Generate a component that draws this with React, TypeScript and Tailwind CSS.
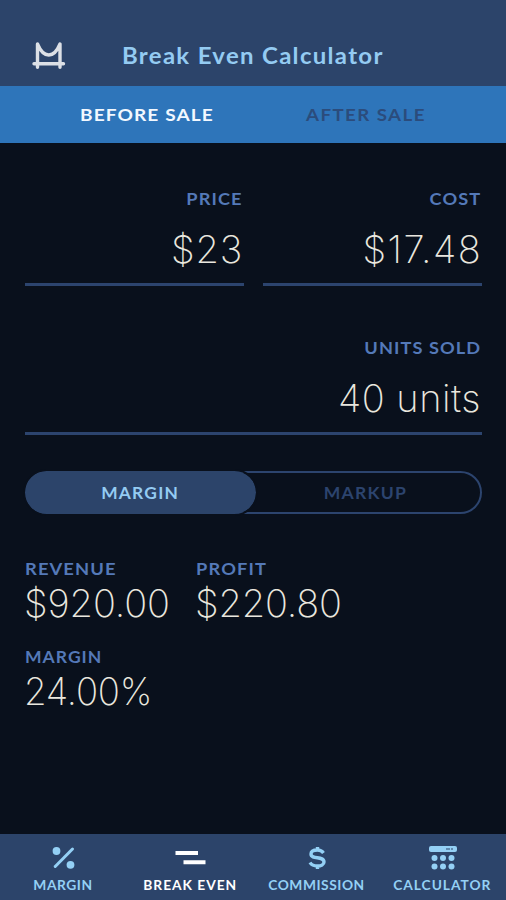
import type { ReactNode } from 'react';

const label = 'text-[17px] leading-6 font-bold text-[#5479b8] whitespace-nowrap';
const value = "font-['Inter',sans-serif] text-[38px] leading-[46px] font-extralight text-[#e9e7df] whitespace-nowrap";

function Field({ name, amount, amountClass }: { name: string; amount: string; amountClass: string }) {
  return (
    <div className="flex flex-1 flex-col items-end border-b-[3px] border-[#2c446e]">
      <div className={`${label} mr-px origin-right scale-x-[1.07] tracking-[1px]`}>{name}</div>
      <div className={`${value} mt-[15px] mb-[11px] ${amountClass}`}>{amount}</div>
    </div>
  );
}

function Result({ name, labelClass, amount, amountClass }: { name: string; labelClass: string; amount: string; amountClass: string }) {
  return (
    <div className="flex h-[88px] flex-col items-start">
      <div className={`${label} origin-left ${labelClass}`}>{name}</div>
      <div className={`${value} -mt-px -ml-px ${amountClass}`}>{amount}</div>
    </div>
  );
}

function NavItem({ name, className, children }: { name: string; className: string; children: ReactNode }) {
  return (
    <div className={`flex flex-1 flex-col items-center ${className}`}>
      <svg width="32" height="28" viewBox="0 0 32 28" className="mt-[10px]">{children}</svg>
      <div className="mt-[5px] scale-x-[1.06] text-[13px] leading-4 font-bold whitespace-nowrap">{name}</div>
    </div>
  );
}

export default function App() {
  return (
    <div className="flex h-[900px] w-[506px] flex-col overflow-hidden bg-[#09101c] font-['Lato',sans-serif]">
      <header className="flex h-[86px] shrink-0 items-start bg-[#2c446a]">
        <svg width="34" height="30" viewBox="0 0 34 30" className="mt-[41px] ml-[32px]" fill="none" stroke="#dce0e6" strokeWidth="3.4" strokeLinecap="round" strokeLinejoin="round">
          <path d="M5.5 26.300V3C8 9 12 14 16.800 14S25.500 9 28 3V26.300M2 22.700H31.500" />
        </svg>
        <h1 className="mt-[42px] ml-[56px] origin-left scale-x-[1.09] text-[22px] leading-7 font-bold tracking-[1.2px] whitespace-nowrap text-[#94cbf2]">Break Even Calculator</h1>
      </header>
      <div className="flex h-[57px] shrink-0 items-center bg-[#2e75ba] text-[17px] leading-6 font-bold">
        <div className="ml-[80px] w-[133px] whitespace-nowrap text-[#f2f8ff]">
          <div className="w-max origin-left scale-x-[1.12] font-bold tracking-[1px]">BEFORE SALE</div>
        </div>
        <div className="ml-[93px] origin-left scale-x-[1.1] tracking-[1.3px] whitespace-nowrap text-[#2b4c7c]">AFTER SALE</div>
      </div>
      <main className="flex flex-1 flex-col pr-[24px] pl-[25px]">
        <div className="mt-[44px] flex gap-[19px]">
          <Field name="PRICE" amount="$23" amountClass="tracking-[0.8px] mr-px" />
          <Field name="COST" amount="$17.48" amountClass="tracking-[1.4px]" />
        </div>
        <div className="mt-[50px] flex">
          <Field name="UNITS SOLD" amount="40 units" amountClass="tracking-[0.5px] mr-px" />
        </div>
        <div className="mt-[36px] flex h-[43px] shrink-0 rounded-full border-2 border-[#2c446e] text-[17px] font-bold tracking-[1.2px]">
          <div className="-m-[2px] flex w-[231px] items-center justify-center rounded-full bg-[#2c446a] text-[#94cbf2] outline-2 outline-[#09101c]">
            <span className="scale-x-[1.02]">MARGIN</span>
          </div>
          <div className="flex flex-1 items-center justify-center pr-[3px] text-[#2c446e]">
            <span className="scale-x-[1.03]">MARKUP</span>
          </div>
        </div>
        <div className="mt-[43px] flex">
          <div className="w-[171px]">
            <Result name="REVENUE" labelClass="scale-x-[1.08] tracking-[1px]" amount="$920.00" amountClass="tracking-[-0.1px]" />
          </div>
          <Result name="PROFIT" labelClass="scale-x-[1.07] tracking-[1.1px]" amount="$220.80" amountClass="tracking-[-0.2px]" />
        </div>
        <Result name="MARGIN" labelClass="scale-x-[1.03] tracking-[1px]" amount="24.00%" amountClass="tracking-[-0.2px] origin-left scale-x-[0.965]" />
      </main>
      <nav className="flex h-[66px] shrink-0 bg-[#2c446a] text-[#94d0f5]">
        <NavItem name="MARGIN" className="tracking-[0.5px]">
          <circle cx="9.500" cy="7" r="3.900" fill="currentColor" />
          <circle cx="23.500" cy="20.800" r="3.900" fill="currentColor" />
          <path d="M25.500 5L8.200 22.500" stroke="currentColor" strokeWidth="3" strokeLinecap="round" />
        </NavItem>
        <NavItem name="BREAK EVEN" className="tracking-[0.9px] text-white">
          <path d="M1.500 9H24M9.500 18.300H31.500" stroke="currentColor" strokeWidth="4" />
        </NavItem>
        <NavItem name="COMMISSION" className="tracking-[0.5px]">
          <path d="M23.500 9C22 7 20 6 17.500 6C13.500 6 11 7.500 11 10C11 16 24 11.500 24 18C24 20.500 21 22 17.500 22C14 22 11.500 21 10 18.500M17.500 3V6M17.500 22V25" fill="none" stroke="currentColor" strokeWidth="3.400" />
        </NavItem>
        <NavItem name="CALCULATOR" className="tracking-[0.9px]">
          <rect x="2" y="2" width="28" height="6" rx="2" fill="currentColor" />
          <path d="M19 5H26" stroke="#2c446a" strokeWidth="1" strokeDasharray="4 1" />
          {[14, 22.500].map((y) => [7.500, 16, 24.500].map((x) => <circle key={`${x}-${y}`} cx={x} cy={y} r="3" fill="currentColor" />))}
        </NavItem>
      </nav>
    </div>
  );
}
